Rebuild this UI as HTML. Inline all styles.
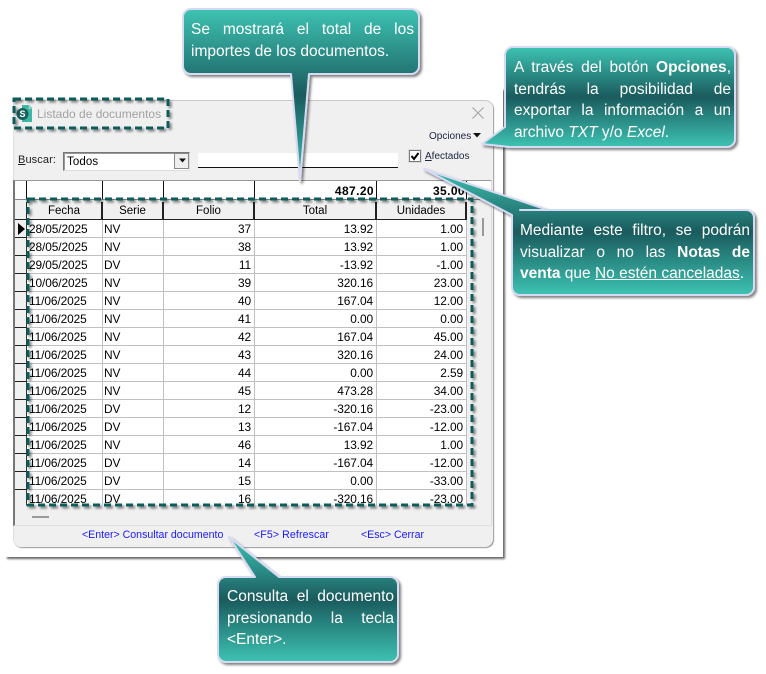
<!DOCTYPE html>
<html><head><meta charset="utf-8">
<style>
html,body{margin:0;padding:0;background:#fff}
#p{position:relative;width:766px;height:674px;overflow:hidden;background:#fff;font-family:"Liberation Sans",sans-serif;color:#000}
.a{position:absolute}
#frame{left:5px;top:88px;width:498px;height:469px;background:#fff;box-shadow:2px 2px 2px rgba(0,0,0,.6)}
#win{left:13px;top:100px;width:480px;height:447px;background:#f0f0f0;border-radius:0 8px 8px 8px;box-shadow:inset 0 1px 0 #c8c8c8,inset 1px 0 0 #e0e0e0,1px 1px 1px #999}
.t{white-space:nowrap;font-size:11px}
#rows{left:15px;top:220px;width:452px;height:285px;overflow:hidden}
table{border-collapse:separate;border-spacing:0;table-layout:fixed;width:452px;font-size:11.9px;letter-spacing:-.1px}
td{padding:1px 3px 0 2px;box-sizing:border-box;height:18px;border-right:1px solid #c0c0c0;border-bottom:1px solid #c0c0c0;white-space:nowrap;overflow:hidden;background:#fff;line-height:16px}
td:nth-child(3){padding-left:1px}
td.i{background:#f0f0f0;border-right:1px solid #333;border-bottom:1px solid #222;padding:0;line-height:0;font-size:0}
td.r{text-align:right}
.h{top:202px;height:17px;background:#f0f0f0;border-right:2px solid #222;border-bottom:1px solid #222;font-size:11.5px;text-align:center;line-height:18px;box-sizing:content-box}
.c{position:absolute;color:#fff;font-size:15.5px;line-height:21.6px;white-space:nowrap}
.c div{text-align:justify;text-align-last:justify;white-space:normal}
.c div.l{text-align-last:left}
.f{top:529px;color:#1a1aff;font-size:10.6px;white-space:nowrap}
</style></head><body><div id="p">
<div class="a" id="frame"></div>
<div class="a" id="win"></div>

<svg class="a" style="left:16px;top:104px" width="18" height="19" viewBox="0 0 18 19"><path d="M6 1H13L16 4V18H6Z" fill="#3fb5a5"/><path d="M12.500 1V5H16" fill="#8fd8cc"/><circle cx="6.500" cy="10" r="6" fill="#17615f"/><text x="6.500" y="13" font-size="9" font-weight="bold" text-anchor="middle" fill="#fff" font-family="Liberation Sans">S</text></svg>
<div class="a t" style="left:37px;top:107px;font-size:12px;color:#a2a2a2">Listado de documentos</div>
<svg class="a" style="left:471px;top:106px" width="14" height="14"><path d="M1.500 1.500L12.500 12.500M12.500 1.500L1.500 12.500" stroke="#a8a8a8" stroke-width="1.200"/></svg>
<div class="a t" style="left:429px;top:131px;font-size:10px;color:#1a2440">Opciones</div>
<svg class="a" style="left:472px;top:132px" width="10" height="7"><path d="M1 1H9L5 5.500Z" fill="#111"/></svg>

<div class="a t" style="left:18px;top:154px;font-size:11px;letter-spacing:.1px;color:#222"><u>B</u>uscar:</div>
<div class="a" style="left:63px;top:152px;width:125px;height:17px;background:#fff;border:1px solid #777;border-right-color:#ddd;border-bottom-color:#ddd;box-shadow:inset 1px 1px 0 #999"></div>
<div class="a t" style="left:67px;top:156px;font-size:11.500px;letter-spacing:.1px">Todos</div>
<div class="a" style="left:174px;top:153px;width:15px;height:16px;background:#efefef;border:1px solid #888;box-sizing:border-box"></div>
<svg class="a" style="left:178px;top:158px" width="9" height="6"><path d="M1 .500H8L4.500 4.500Z" fill="#111"/></svg>
<div class="a" style="left:198px;top:153px;width:200px;height:14px;background:#fff;border-bottom:1px solid #111"></div>
<div class="a" style="left:409px;top:150px;width:10px;height:10px;background:#fff;border:1px solid #777;box-shadow:0 0 0 1px #ddd"></div>
<svg class="a" style="left:409px;top:150px" width="12" height="12"><path d="M2.500 6L5 9L9.500 3" fill="none" stroke="#000" stroke-width="2"/></svg>
<div class="a t" style="left:425px;top:151px;font-size:10px;color:#1a2440"><u>A</u>fectados</div>

<div class="a" style="left:13px;top:180px;width:479px;height:346px;border-left:2px solid #777;border-top:1px solid #999;border-right:1px solid #ddd;border-bottom:1px solid #ddd;box-sizing:border-box;background:#f0f0f0"></div>
<div class="a" style="left:15px;top:181px;width:476px;height:18px;background:#fff"></div>
<div class="a" style="left:26px;top:181px;width:1px;height:18px;background:#111"></div>
<div class="a" style="left:102px;top:181px;width:1px;height:18px;background:#111"></div>
<div class="a" style="left:163px;top:181px;width:1px;height:18px;background:#111"></div>
<div class="a" style="left:254px;top:181px;width:1px;height:18px;background:#111"></div>
<div class="a" style="left:376px;top:181px;width:1px;height:18px;background:#111"></div>
<div class="a" style="left:466px;top:181px;width:1px;height:18px;background:#111"></div>
<div class="a" style="left:14px;top:199px;width:477px;height:1px;background:#888"></div>
<div class="a" style="left:300px;top:184px;width:74px;text-align:right;font-weight:bold;font-size:12px;letter-spacing:.4px">487.20</div>
<div class="a" style="left:390px;top:184px;width:75px;text-align:right;font-weight:bold;font-size:12px;letter-spacing:.4px;overflow:hidden">35.00</div>

<div class="a" style="left:15px;top:202px;width:11px;height:17px;background:#f0f0f0;border-right:1px solid #222;border-bottom:1px solid #222"></div>
<div class="a h" style="left:27px;width:74px">Fecha</div>
<div class="a h" style="left:103px;width:59px">Serie</div>
<div class="a h" style="left:164px;width:89px">Folio</div>
<div class="a h" style="left:255px;width:120px">Total</div>
<div class="a h" style="left:377px;width:88px">Unidades</div>

<div class="a" id="rows"><table>
<colgroup><col style="width:12px"><col style="width:76px"><col style="width:61px"><col style="width:91px"><col style="width:122px"><col style="width:90px"></colgroup>
<tr><td class="i"></td><td>28/05/2025</td><td>NV</td><td class="r">37</td><td class="r">13.92</td><td class="r">1.00</td></tr>
<tr><td class="i"></td><td>28/05/2025</td><td>NV</td><td class="r">38</td><td class="r">13.92</td><td class="r">1.00</td></tr>
<tr><td class="i"></td><td>29/05/2025</td><td>DV</td><td class="r">11</td><td class="r">-13.92</td><td class="r">-1.00</td></tr>
<tr><td class="i"></td><td>10/06/2025</td><td>NV</td><td class="r">39</td><td class="r">320.16</td><td class="r">23.00</td></tr>
<tr><td class="i"></td><td>11/06/2025</td><td>NV</td><td class="r">40</td><td class="r">167.04</td><td class="r">12.00</td></tr>
<tr><td class="i"></td><td>11/06/2025</td><td>NV</td><td class="r">41</td><td class="r">0.00</td><td class="r">0.00</td></tr>
<tr><td class="i"></td><td>11/06/2025</td><td>NV</td><td class="r">42</td><td class="r">167.04</td><td class="r">45.00</td></tr>
<tr><td class="i"></td><td>11/06/2025</td><td>NV</td><td class="r">43</td><td class="r">320.16</td><td class="r">24.00</td></tr>
<tr><td class="i"></td><td>11/06/2025</td><td>NV</td><td class="r">44</td><td class="r">0.00</td><td class="r">2.59</td></tr>
<tr><td class="i"></td><td>11/06/2025</td><td>NV</td><td class="r">45</td><td class="r">473.28</td><td class="r">34.00</td></tr>
<tr><td class="i"></td><td>11/06/2025</td><td>DV</td><td class="r">12</td><td class="r">-320.16</td><td class="r">-23.00</td></tr>
<tr><td class="i"></td><td>11/06/2025</td><td>DV</td><td class="r">13</td><td class="r">-167.04</td><td class="r">-12.00</td></tr>
<tr><td class="i"></td><td>11/06/2025</td><td>NV</td><td class="r">46</td><td class="r">13.92</td><td class="r">1.00</td></tr>
<tr><td class="i"></td><td>11/06/2025</td><td>DV</td><td class="r">14</td><td class="r">-167.04</td><td class="r">-12.00</td></tr>
<tr><td class="i"></td><td>11/06/2025</td><td>DV</td><td class="r">15</td><td class="r">0.00</td><td class="r">-33.00</td></tr>
<tr><td class="i"></td><td>11/06/2025</td><td>DV</td><td class="r">16</td><td class="r">-320.16</td><td class="r">-23.00</td></tr>
</table></div>
<svg class="a" style="left:17px;top:222px" width="9" height="14"><path d="M1 1V13L8 7Z" fill="#000"/></svg>
<div class="a" style="left:482px;top:218px;width:2px;height:18px;background:#999"></div>
<div class="a" style="left:32px;top:516px;width:17px;height:2px;background:#999"></div>

<div class="a f" style="left:82px">&lt;Enter&gt; Consultar documento</div>
<div class="a f" style="left:254px;letter-spacing:.1px">&lt;F5&gt; Refrescar</div>
<div class="a f" style="left:361px">&lt;Esc&gt; Cerrar</div>

<svg class="a" style="left:0;top:0" width="766" height="674">
<defs>
<linearGradient id="g" x1="0" y1="0" x2="0" y2="1"><stop offset="0" stop-color="#3dc3b2"/><stop offset=".5" stop-color="#1b5b5e"/><stop offset="1" stop-color="#3dc3b2"/></linearGradient>
<filter id="s" x="-10%" y="-10%" width="120%" height="125%"><feDropShadow dx="2" dy="2" stdDeviation="1.200" flood-color="#000" flood-opacity=".5"/></filter>
</defs>
<g fill="none" stroke="#0e5c5a" stroke-width="3" stroke-dasharray="7 4" filter="url(#s)">
<rect x="14" y="99" width="154" height="29"/>
<rect x="28" y="199" width="444" height="306"/>
</g>
<g fill="url(#g)" stroke="#d6daf3" stroke-width="2" stroke-linejoin="round" filter="url(#s)">
<path d="M191 9H411A8 8 0 0 1 419 17V66A8 8 0 0 1 411 74H309L300 181L291 74H191A8 8 0 0 1 183 66V17A8 8 0 0 1 191 9Z"/>
<path d="M513 47H727A8 8 0 0 1 735 55V139A8 8 0 0 1 727 147H510L482 144L505 127V55A8 8 0 0 1 513 47Z"/>
<path d="M520 210H746A8 8 0 0 1 754 218V287A8 8 0 0 1 746 295H520A8 8 0 0 1 512 287V215L424 169L548 210Z"/>
<path d="M226 577H255L229 537L279 577H390A8 8 0 0 1 398 585V654A8 8 0 0 1 390 662H226A8 8 0 0 1 218 654V585A8 8 0 0 1 226 577Z"/>
</g>
</svg>

<div class="c" style="left:191px;top:19px;width:223px">
<div>Se mostrará el total de los</div>
<div class="l">importes de los documentos.</div>
</div>
<div class="c" style="left:514px;top:57px;width:217px">
<div>A través del botón <b>Opciones</b>,</div>
<div>tendrás la posibilidad de</div>
<div>exportar la información a un</div>
<div class="l">archivo <i>TXT</i> y/o <i>Excel</i>.</div>
</div>
<div class="c" style="left:520px;top:220px;width:230px">
<div>Mediante este filtro, se podrán</div>
<div>visualizar o no las <b>Notas de</b></div>
<div class="l"><b>venta</b> que <u>No estén canceladas</u>.</div>
</div>
<div class="c" style="left:227px;top:586px;width:167px">
<div>Consulta el documento</div>
<div>presionando la tecla</div>
<div class="l">&lt;Enter&gt;.</div>
</div>
</div></body></html>
